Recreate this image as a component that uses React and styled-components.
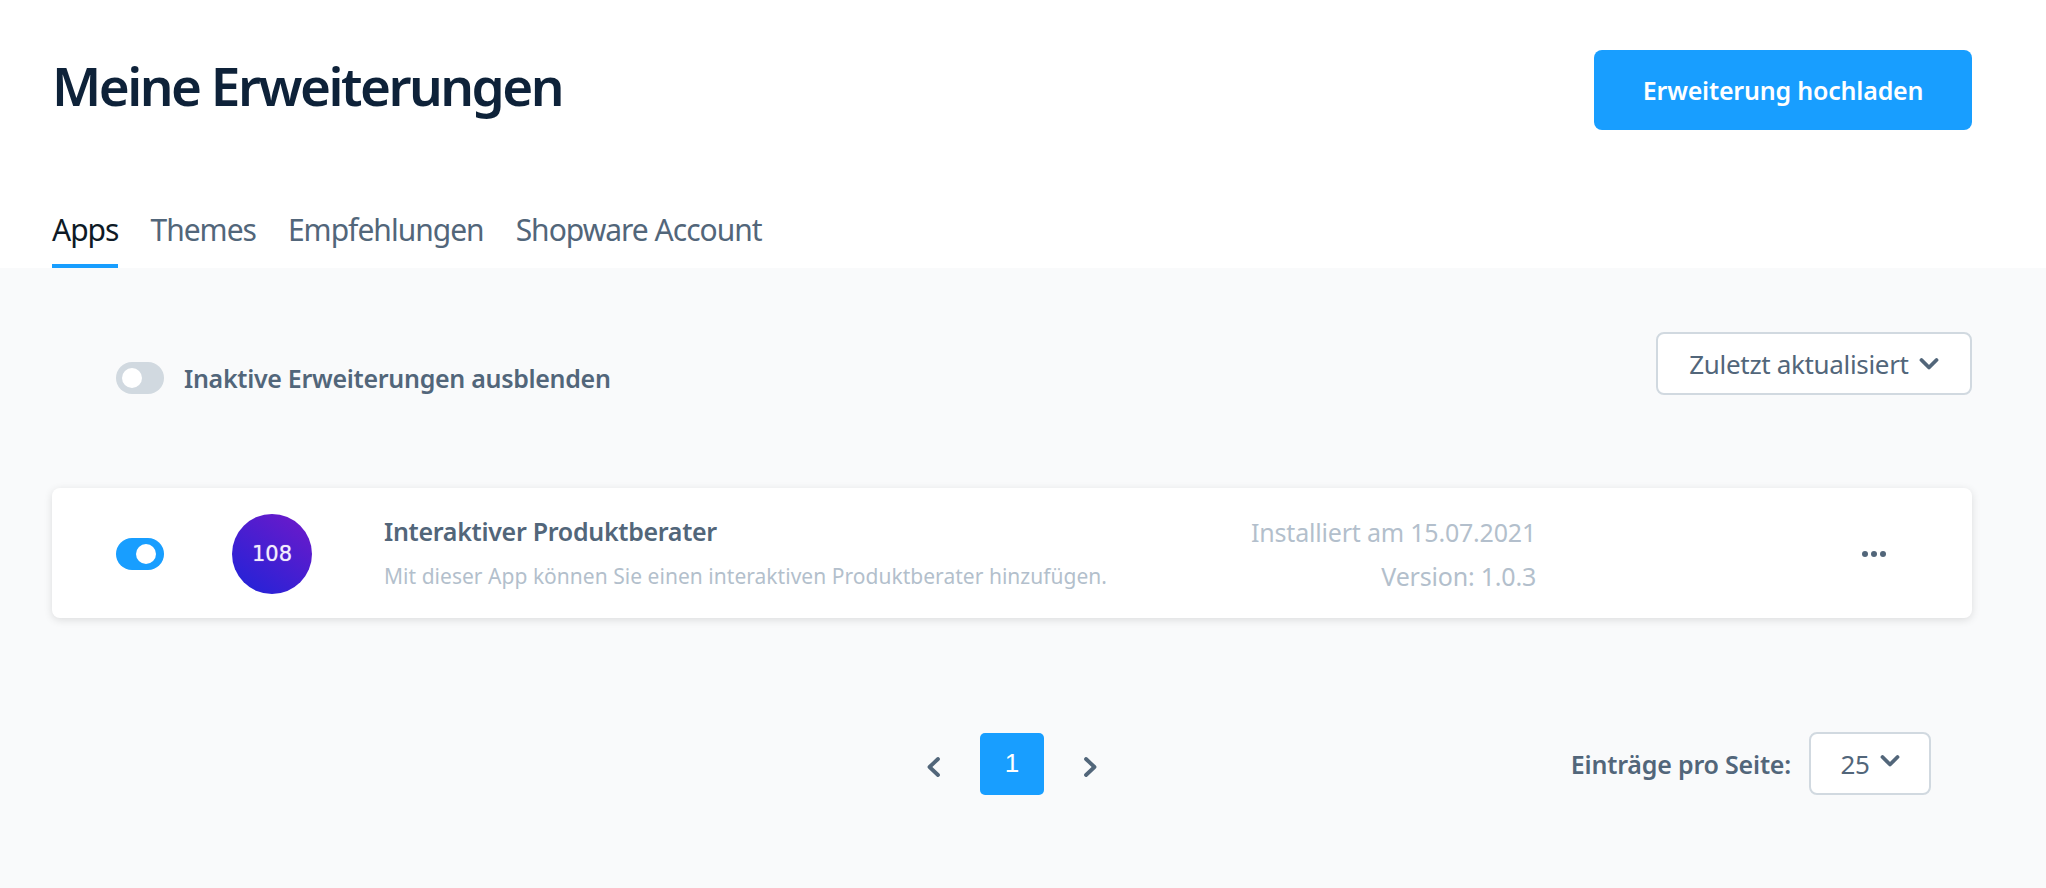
import React from 'react';
import styled, { createGlobalStyle } from 'styled-components';

const GlobalStyle = createGlobalStyle`
    html, body {
        margin: 0;
        padding: 0;
        background: #f9fafb;
    }

    body {
        font-family: "Noto Sans", "Open Sans", sans-serif;
        color: #52667a;
    }
`;

const Page = styled.div`
    width: 2046px;
    height: 888px;
    overflow: hidden;
    background: #f9fafb;
`;

const Header = styled.header`
    height: 268px;
    box-sizing: border-box;
    padding: 50px 74px 0 52px;
    background: #fff;
    display: flex;
    flex-direction: column;
    justify-content: space-between;
`;

const TitleRow = styled.div`
    display: flex;
    justify-content: space-between;
    align-items: center;
`;

const Title = styled.h1`
    margin: 0 0 8px;
    font-size: 53px;
    line-height: 72px;
    font-weight: 600;
    letter-spacing: -2.5px;
    color: #0e2239;
`;

const PrimaryButton = styled.button`
    width: 378px;
    height: 80px;
    border: 0;
    border-radius: 8px;
    background: #189eff;
    color: #fff;
    font-family: inherit;
    font-size: 25px;
    font-weight: 600;
    letter-spacing: -0.2px;
`;

const Tabs = styled.nav`
    display: flex;
    gap: 32px;
`;

const Tab = styled.a`
    height: 64px;
    box-sizing: border-box;
    padding-top: 6px;
    font-size: 30px;
    line-height: 40px;
    letter-spacing: -1px;
    white-space: nowrap;
    color: ${({ $active }) => ($active ? '#0e1a26' : '#52667a')};
    border-bottom: 4px solid ${({ $active }) => ($active ? '#189eff' : 'transparent')};
`;

const Content = styled.main`
    padding: 64px 74px 0 52px;
`;

const FilterRow = styled.div`
    display: flex;
    justify-content: space-between;
    align-items: flex-start;
`;

const ToggleLabel = styled.label`
    display: flex;
    align-items: center;
    gap: 20px;
    padding: 30px 0 0 64px;
    font-size: 25px;
    line-height: 32px;
    font-weight: 600;
    letter-spacing: -0.3px;
`;

const Toggle = styled.span`
    display: block;
    position: relative;
    flex: none;
    width: 48px;
    height: 32px;
    border-radius: 16px;
    background: ${({ $on }) => ($on ? '#189eff' : '#d1d9e0')};

    &::after {
        content: '';
        position: absolute;
        top: 6px;
        left: ${({ $on }) => ($on ? '20px' : '6px')};
        width: 20px;
        height: 20px;
        border-radius: 50%;
        background: #fff;
    }
`;

const Select = styled.div`
    display: flex;
    align-items: center;
    justify-content: center;
    box-sizing: border-box;
    gap: 10px;
    width: ${({ $width }) => $width}px;
    height: 63px;
    border: 2px solid #d1d9e0;
    border-radius: 8px;
    background: #fff;
    font-size: 26px;
    letter-spacing: -0.33px;
    white-space: nowrap;
`;

const Card = styled.article`
    display: flex;
    align-items: center;
    height: 130px;
    margin-top: 93px;
    padding: 2px 0 0 64px;
    box-sizing: border-box;
    border-radius: 8px;
    background: #fff;
    box-shadow: 0 2px 8px rgba(0, 0, 0, 0.12);
`;

const Avatar = styled.div`
    display: flex;
    align-items: center;
    justify-content: center;
    flex: none;
    width: 80px;
    height: 80px;
    margin-left: 68px;
    border-radius: 50%;
    background: linear-gradient(215deg, #7119c9 0%, #2a22d6 85%);
    color: #f3eefc;
    font-family: "DejaVu Sans", sans-serif;
    font-size: 21px;
    text-shadow: 0 0 1px rgba(243, 238, 252, 0.7);
`;

const CardText = styled.div`
    flex: 1;
    margin: -2px 0 0 72px;
`;

const CardTitle = styled.div`
    font-size: 25px;
    line-height: 32px;
    font-weight: 600;
    letter-spacing: -0.3px;
`;

const CardDescription = styled.div`
    margin-top: 13px;
    font-size: 21px;
    line-height: 32px;
    letter-spacing: 0.03px;
    color: #b3bfcc;
`;

const CardMeta = styled.div`
    width: 300px;
    text-align: right;
    font-size: 25px;
    line-height: 44px;
    letter-spacing: -0.2px;
    color: #b3bfcc;
`;

const MoreDots = styled.div`
    display: flex;
    gap: 3px;
    margin: 0 86px 0 326px;
`;

const Dot = styled.span`
    width: 6px;
    height: 6px;
    border-radius: 50%;
    background: #52667a;
`;

const Footer = styled.footer`
    display: flex;
    align-items: center;
    margin-top: 114px;
    padding: 0 41px 0 872px;
`;

const Pager = styled.div`
    display: flex;
    align-items: center;
    gap: 36px;
`;

const PagerArrow = styled.span`
    display: flex;
    padding-top: 6px;
`;

const PageNumber = styled.span`
    display: flex;
    align-items: center;
    justify-content: center;
    width: 64px;
    height: 62px;
    border-radius: 5px;
    background: #189eff;
    color: #fff;
    font-family: "Liberation Sans", Arial, sans-serif;
    font-size: 26px;
`;

const PerPage = styled.div`
    display: flex;
    align-items: center;
    gap: 18px;
    margin-left: auto;
`;

const PerPageLabel = styled.span`
    font-size: 25px;
    font-weight: 600;
    letter-spacing: -0.2px;
    white-space: nowrap;
`;

const RaisedIcon = styled.span`
    display: flex;
    padding-bottom: 6px;
`;

const Chevron = ({ direction = 'down', size = 20 }) => {
    const points = {
        down: 'M2.5 6 L10 13.5 L17.5 6',
        left: 'M14 2 L5.5 10 L14 18',
        right: 'M6 2 L14.5 10 L6 18',
    };
    return (
        <svg width={size} height={size} viewBox="0 0 20 20" fill="none">
            <path d={points[direction]} stroke="#52667a" strokeWidth="3.8" strokeLinecap="round" strokeLinejoin="round" />
        </svg>
    );
};

function App() {
    return (
        <Page>
            <GlobalStyle />
            <Header>
                <TitleRow>
                    <Title>Meine Erweiterungen</Title>
                    <PrimaryButton>Erweiterung hochladen</PrimaryButton>
                </TitleRow>
                <Tabs>
                    <Tab $active>Apps</Tab>
                    <Tab>Themes</Tab>
                    <Tab>Empfehlungen</Tab>
                    <Tab>Shopware Account</Tab>
                </Tabs>
            </Header>
            <Content>
                <FilterRow>
                    <ToggleLabel>
                        <Toggle />
                        Inaktive Erweiterungen ausblenden
                    </ToggleLabel>
                    <Select $width={316}>
                        Zuletzt aktualisiert
                        <Chevron />
                    </Select>
                </FilterRow>
                <Card>
                    <Toggle $on />
                    <Avatar>108</Avatar>
                    <CardText>
                        <CardTitle>Interaktiver Produktberater</CardTitle>
                        <CardDescription>Mit dieser App können Sie einen interaktiven Produktberater hinzufügen.</CardDescription>
                    </CardText>
                    <CardMeta>
                        <div>Installiert am 15.07.2021</div>
                        <div>Version: 1.0.3</div>
                    </CardMeta>
                    <MoreDots>
                        <Dot />
                        <Dot />
                        <Dot />
                    </MoreDots>
                </Card>
                <Footer>
                    <Pager>
                        <PagerArrow>
                            <Chevron direction="left" />
                        </PagerArrow>
                        <PageNumber>1</PageNumber>
                        <PagerArrow>
                            <Chevron direction="right" />
                        </PagerArrow>
                    </Pager>
                    <PerPage>
                        <PerPageLabel>Einträge pro Seite:</PerPageLabel>
                        <Select $width={122}>
                            25
                            <RaisedIcon>
                                <Chevron />
                            </RaisedIcon>
                        </Select>
                    </PerPage>
                </Footer>
            </Content>
        </Page>
    );
}

export default App;
